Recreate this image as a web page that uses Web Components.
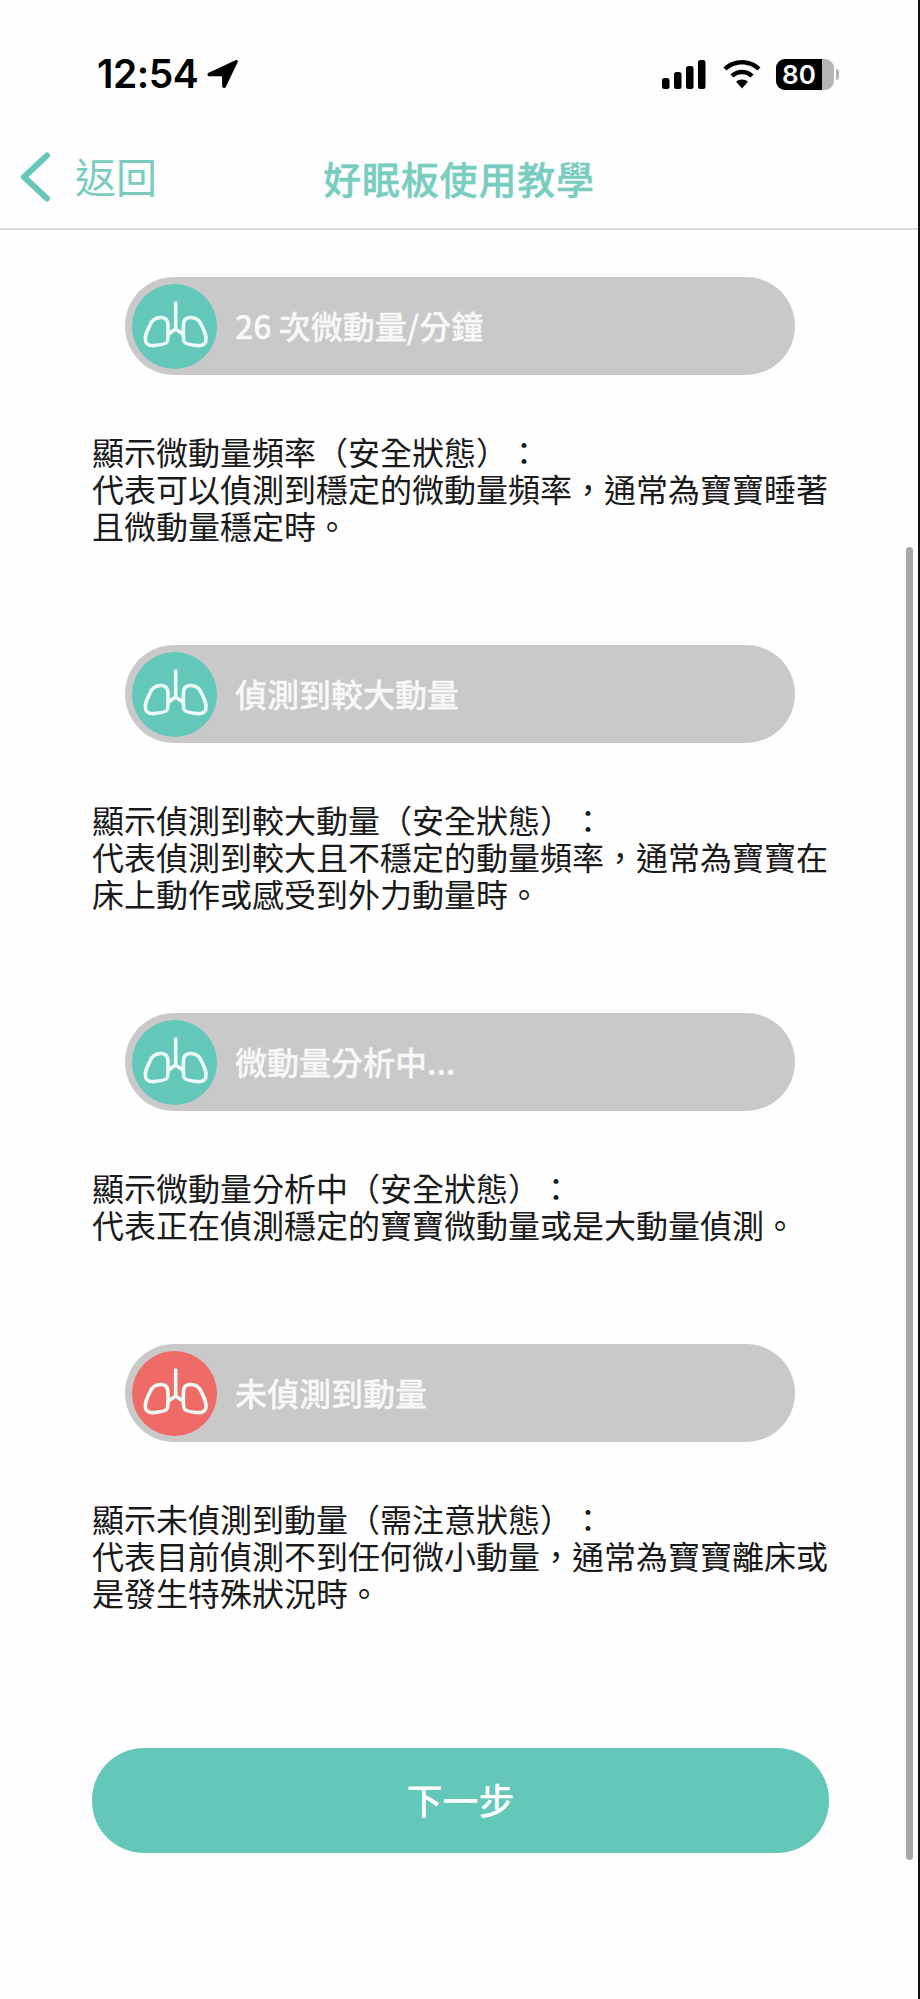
<!DOCTYPE html>
<html lang="zh-Hant">
<head>
<meta charset="utf-8">
<title>好眠板使用教學</title>
<style>
html,body{margin:0;padding:0;background:#fefefe}
body{font-family:"Noto Sans CJK TC","Liberation Sans",sans-serif;text-spacing-trim:space-all}
</style>
</head>
<body>
<tutorial-screen>
  <status-bar slot="top" time="12:54" battery="80"></status-bar>
  <nav-header slot="top" back="返回">好眠板使用教學</nav-header>

  <state-section label="26 次微動量/分鐘">顯示微動量頻率（安全狀態）：<br>代表可以偵測到穩定的微動量頻率，通常為寶寶睡著<br>且微動量穩定時。</state-section>
  <state-section label="偵測到較大動量">顯示偵測到較大動量（安全狀態）：<br>代表偵測到較大且不穩定的動量頻率，通常為寶寶在<br>床上動作或感受到外力動量時。</state-section>
  <state-section label="微動量分析中...">顯示微動量分析中（安全狀態）：<br>代表正在偵測穩定的寶寶微動量或是大動量偵測。</state-section>
  <state-section label="未偵測到動量" alert>顯示未偵測到動量（需注意狀態）：<br>代表目前偵測不到任何微小動量，通常為寶寶離床或<br>是發生特殊狀況時。</state-section>

  <next-button>下一步</next-button>
</tutorial-screen>

<script>
class TutorialScreen extends HTMLElement{
constructor(){
  super();
  this.attachShadow({mode:'open'}).innerHTML=`
<style>
:host{display:block;position:relative;box-sizing:border-box;width:920px;height:1999px;overflow:hidden;background:#fefefe;border-right:2px solid #111}
main{display:flex;flex-direction:column;padding:47px 0 0 92px;width:737px}
.bar{position:absolute;left:906px;top:547px;width:7px;height:1313px;border-radius:4px;background:#a8a8a8}
</style>
<slot name="top"></slot>
<main><slot></slot></main>
<div class="bar"></div>`;
}
}

class StatusBar extends HTMLElement{
constructor(){
  super();
  this.attachShadow({mode:'open'}).innerHTML=`
<style>
:host{display:flex;box-sizing:border-box;height:100px;padding:49px 79px 0 97px;justify-content:space-between;align-items:flex-start;color:#000;font-family:Inter,"Liberation Sans",sans-serif}
.left,.right{display:flex;align-items:center}
.left{height:50px;gap:8px}
.time{font-size:39px;font-weight:600;line-height:50px;letter-spacing:-.5px}
.right{height:50px}
svg{display:block}
.batt{display:flex;position:relative;margin-left:15px;width:58px;height:31px;border-radius:9px;overflow:hidden;background:#b5b5b5}
.fill{width:46px;background:#000;color:#fff;font-size:26px;font-weight:600;line-height:31px;text-align:center}
.nub{width:3px;height:11px;margin-left:2px;border-radius:0 3px 3px 0;background:#b5b5b5}
</style>
<div class="left">
  <span class="time"></span>
  <svg width="32" height="30" viewBox="0 0 32 30"><path d="M29.5 1.2 2.6 13.700c-1.900.9-1.300 3.500.8 3.500h11.600c.7 0 1.100.4 1.100 1.100v8.800c0 2.100 2.800 2.700 3.700.8L31.600 3.300c.7-1.500-.7-2.800-2.100-2.100z" fill="#000"/></svg>
</div>
<div class="right">
  <svg width="44" height="29" viewBox="0 0 44 29"><rect x="0" y="18" width="7.500" height="11" rx="2.500"/><rect x="12" y="12" width="7.500" height="17" rx="2.500"/><rect x="24" y="6" width="7.500" height="23" rx="2.500"/><rect x="36" y="0" width="7.500" height="29" rx="2.500"/></svg>
  <svg style="margin-left:17px" width="38" height="29" viewBox="0 0 38 29"><path d="M19 0C11.800 0 5.300 2.800.5 7.400l3 3.200C7.500 6.800 13 4.500 19 4.500s11.500 2.300 15.500 6.100l3-3.200C32.700 2.800 26.200 0 19 0z"/><path d="M19 9.800c-4.500 0-8.600 1.800-11.600 4.600l3.100 3.200c2.200-2.100 5.200-3.300 8.500-3.300s6.300 1.200 8.500 3.300l3.100-3.200c-3-2.800-7.100-4.600-11.600-4.600z"/><path d="M19 19.500c-2.300 0-4.400.9-5.900 2.300L19 28.500l5.900-6.700c-1.500-1.400-3.600-2.300-5.900-2.300z"/></svg>
  <div class="batt"><div class="fill"></div></div>
  <div class="nub"></div>
</div>`;
}
connectedCallback(){
  this.shadowRoot.querySelector('.time').textContent=this.getAttribute('time');
  this.shadowRoot.querySelector('.fill').textContent=this.getAttribute('battery');
}
}

class NavHeader extends HTMLElement{
constructor(){
  super();
  this.attachShadow({mode:'open'}).innerHTML=`
<style>
:host{display:block;position:relative;box-sizing:border-box;height:130px;border-bottom:2px solid #d8d8d8;color:#78cdbf;font-family:"Noto Sans CJK TC",sans-serif}
.title{text-align:center;font-size:38px;font-weight:500;line-height:155px;height:128px;letter-spacing:.8px;-webkit-text-stroke:.4px #78cdbf}
.back{position:absolute;left:20px;top:52px;display:flex;align-items:center;gap:24px;font-size:41px;line-height:50px}
.back span{margin-top:-4px}
svg{display:block}
</style>
<div class="title"><slot></slot></div>
<div class="back">
  <svg width="31" height="50" viewBox="0 0 31 50"><path d="M27 3.500 4 25l23 21.500" fill="none" stroke="#66c8b8" stroke-width="6" stroke-linecap="round" stroke-linejoin="round"/></svg>
  <span></span>
</div>`;
}
connectedCallback(){
  this.shadowRoot.querySelector('.back span').textContent=this.getAttribute('back');
}
}

class StatePill extends HTMLElement{
constructor(){
  super();
  this.attachShadow({mode:'open'}).innerHTML=`
<style>
:host{display:flex;box-sizing:border-box;width:670px;height:98px;align-items:center;padding-left:7px;gap:18px;border-radius:49px;background:#c9c9c9;color:#f8f8f8;font-size:32px;font-weight:500}
.dot{flex:none;width:85px;height:85px;border-radius:50%;background:var(--dot,#64c8b8)}
span{margin-top:-2px;-webkit-text-stroke:.3px #f8f8f8}
svg{display:block}
</style>
<div class="dot">
  <svg width="85" height="85" viewBox="0 0 85 85" fill="none" stroke="#eefcf8" stroke-width="3.600" stroke-linecap="round" stroke-linejoin="round">
    <path d="M43.700 19V45M43.700 45 36.500 50M43.700 45 50.900 50"/>
    <path d="M30 33.500C24 33 20 36 18 41 15 47 12.500 52 13.500 57 14.500 61.500 18 62 23 61.500 28 61 33 60.500 35 58 36.500 56 36 48 36 41 36 36 34 34 30 33.500Z"/>
    <path d="M57.400 33.500C63.400 33 67.400 36 69.400 41 72.400 47 74.900 52 73.900 57 72.900 61.500 69.400 62 64.400 61.500 59.400 61 54.400 60.500 52.400 58 50.900 56 51.400 48 51.400 41 51.400 36 53.400 34 57.400 33.500Z"/>
  </svg>
</div>
<span><slot></slot></span>`;
}
}

class StateSection extends HTMLElement{
constructor(){
  super();
  this.attachShadow({mode:'open'}).innerHTML=`
<style>
:host{display:block;margin-bottom:101px}
state-pill{margin-left:33px;margin-bottom:58px}
p{margin:0;font-size:32px;line-height:37px;color:#1a1a1a;white-space:nowrap}
</style>
<state-pill></state-pill>
<p><slot></slot></p>`;
}
connectedCallback(){
  const pill=this.shadowRoot.querySelector('state-pill');
  pill.textContent=this.getAttribute('label');
  if(this.hasAttribute('alert')) pill.style.setProperty('--dot','#ee6b68');
}
}

class NextButton extends HTMLElement{
constructor(){
  super();
  this.attachShadow({mode:'open'}).innerHTML=`
<style>
:host{display:block;margin-top:36px}
button{display:block;width:737px;height:105px;padding:0 0 3px;border:0;border-radius:52px;background:#64c8b8;color:#fff;font:500 36px "Noto Sans CJK TC",sans-serif}
</style>
<button><slot></slot></button>`;
}
}

customElements.define('state-pill',StatePill);
customElements.define('state-section',StateSection);
customElements.define('status-bar',StatusBar);
customElements.define('nav-header',NavHeader);
customElements.define('next-button',NextButton);
customElements.define('tutorial-screen',TutorialScreen);
</script>
</body>
</html>
